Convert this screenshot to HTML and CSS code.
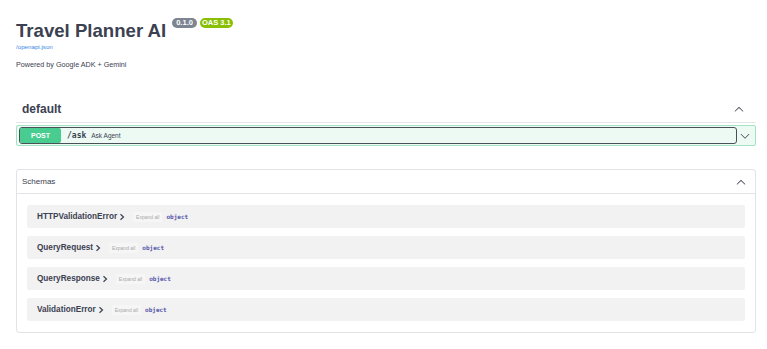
FILE: index.html
```html
<!DOCTYPE html>
<html>
<head>
    <title>Travel Planner AI - Swagger UI</title>
    <meta charset="utf-8">
    <link rel="stylesheet" href="styles.css">
</head>
<body>
    <div class="wrapper">
        <div class="info">
            <h2 class="title">Travel Planner AI<span class="badges"><small class="version">0.1.0</small><small class="version oas">OAS 3.1</small></span></h2>
            <a class="url" href="/openapi.json">/openapi.json</a>
            <p class="desc">Powered by Google ADK + Gemini</p>
        </div>

        <div class="tag-section">
            <h3 class="tag">
                <span>default</span>
                <svg class="arrow" viewBox="0 0 20 20"><path d="M17.418 14.908c.272.268.709.268.979 0s.271-.701 0-.969l-7.908-7.830c-.27-.268-.707-.268-.979 0l-7.908 7.830c-.27.268-.27.701 0 .969.271.268.709.268.979 0L10 7.767l7.418 7.141z"/></svg>
            </h3>
            <div class="opblock post">
                <div class="summary">
                    <button class="summary-control">
                        <span class="method">POST</span>
                        <span class="path">/ask</span>
                        <span class="summary-desc">Ask Agent</span>
                    </button>
                    <svg class="arrow" viewBox="0 0 20 20"><path d="M17.418 6.109c.272-.268.709-.268.979 0s.271.701 0 .969l-7.908 7.83c-.27.268-.707.268-.979 0l-7.908-7.83c-.27-.268-.27-.701 0-.969.271-.268.709-.268.979 0L10 13.25l7.418-7.141z"/></svg>
                </div>
            </div>
        </div>

        <section class="models">
            <h4>
                <span>Schemas</span>
                <svg class="arrow" viewBox="0 0 20 20"><path d="M17.418 14.908c.272.268.709.268.979 0s.271-.701 0-.969l-7.908-7.830c-.27-.268-.707-.268-.979 0l-7.908 7.830c-.27.268-.27.701 0 .969.271.268.709.268.979 0L10 7.767l7.418 7.141z"/></svg>
            </h4>
            <div class="model-list">
                <div class="model-row">
                    <span class="model-title">HTTPValidationError</span>
                    <svg class="toggle" viewBox="0 0 6 8"><path d="M1.5 1.2 4.5 4 1.5 6.8"/></svg>
                    <span class="expand">Expand all</span>
                    <span class="type">object</span>
                </div>
                <div class="model-row">
                    <span class="model-title">QueryRequest</span>
                    <svg class="toggle" viewBox="0 0 6 8"><path d="M1.5 1.2 4.5 4 1.5 6.8"/></svg>
                    <span class="expand">Expand all</span>
                    <span class="type">object</span>
                </div>
                <div class="model-row">
                    <span class="model-title">QueryResponse</span>
                    <svg class="toggle" viewBox="0 0 6 8"><path d="M1.5 1.2 4.5 4 1.5 6.8"/></svg>
                    <span class="expand">Expand all</span>
                    <span class="type">object</span>
                </div>
                <div class="model-row">
                    <span class="model-title">ValidationError</span>
                    <svg class="toggle" viewBox="0 0 6 8"><path d="M1.5 1.2 4.5 4 1.5 6.8"/></svg>
                    <span class="expand">Expand all</span>
                    <span class="type">object</span>
                </div>
            </div>
        </section>
    </div>
</body>
</html>
```

FILE: styles.css
```css
body { margin: 0; background: #fff; font-family: "Liberation Sans", Arial, sans-serif; color: #3b4151; }
.wrapper { width: 740px; padding: 0 11px 0 16px; }

.info { padding-top: 20px; }
.title { margin: 0; font-size: 18.6px; line-height: 22px; font-weight: bold; color: #3b4151; }
.badges { display: inline-flex; gap: 3px; margin-left: 6px; vertical-align: top; margin-top: -2px; }
.version { display: inline-block; font-size: 7.5px; line-height: 10px; font-weight: bold; color: #fff; background: #7d8492; border-radius: 6px; padding: 0 4px; }
.version.oas { background: #89bf04; padding: 0 2px; }
.url { display: block; font-size: 6.2px; line-height: 9px; color: #3b88e8; text-decoration: none; }
.desc { margin: 9px 0 0; font-size: 7.2px; line-height: 9px; color: #3b4151; }

.tag-section { margin-top: 27px; }
.tag { box-sizing: border-box; height: 27px; margin: 0; padding: 0 12px 0 6px; display: flex; align-items: center; justify-content: space-between; font-size: 12px; font-weight: bold; border-bottom: 1px solid #e4e5e8; }
.arrow { width: 10px; height: 10px; fill: #3b4151; }

.opblock { margin-top: 2px; border: 1px solid #a2e3c5; border-radius: 2px; background: #edfaf4; }
.summary { display: flex; align-items: center; padding: 1px 5px 1px 2px; }
.summary-control { flex: 1; box-sizing: border-box; height: 17px; display: flex; align-items: center; padding: 0; margin: 0 3px 0 0; background: none; border: 1px solid #4a5058; border-radius: 3px; text-align: left; font-family: inherit; color: #3b4151; }
.method { box-sizing: border-box; width: 41px; height: 15px; line-height: 15px; text-align: center; font-size: 7px; font-weight: bold; color: #fff; background: #49cc90; border-radius: 2px; }
.path { margin-left: 6px; font-family: "DejaVu Sans Mono", "Liberation Mono", monospace; font-size: 8px; font-weight: bold; }
.summary-desc { margin-left: 5px; font-size: 6.5px; }

.models { margin-top: 23px; border: 1px solid #e2e3e6; border-radius: 3px; }
.models h4 { box-sizing: border-box; height: 24px; margin: 0; padding: 0 9px 0 5px; display: flex; align-items: center; justify-content: space-between; font-size: 8px; font-weight: normal; border-bottom: 1px solid #e2e3e6; }
.model-list { display: flex; flex-direction: column; gap: 8px; padding: 11px 10px 11px 10px; }
.model-row { height: 23px; display: flex; align-items: center; padding: 0 10px; background: #f2f2f2; border-radius: 2px; }
.model-title { font-size: 8.2px; font-weight: bold; }
.toggle { width: 6px; height: 8px; margin-left: 2px; fill: none; stroke: #3b4151; stroke-width: 1.2; }
.expand { margin-left: 8px; padding: 2px 3px; font-size: 5px; color: #a8a8a8; background: rgba(255, 255, 255, .35); }
.type { margin-left: 4px; font-family: "DejaVu Sans Mono", "Liberation Mono", monospace; font-size: 6px; font-weight: bold; color: #55a; }
```
